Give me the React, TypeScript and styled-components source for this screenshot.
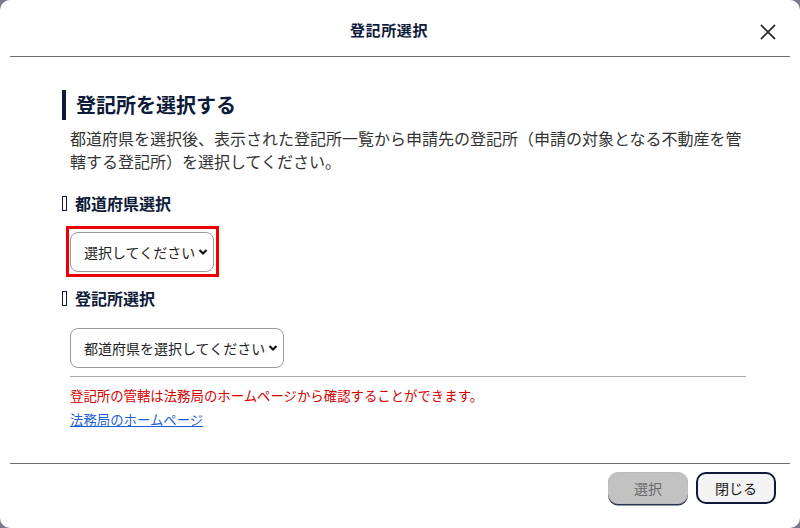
import styled, { createGlobalStyle } from 'styled-components';

const GlobalStyle = createGlobalStyle`
  html, body {
    margin: 0;
    padding: 0;
    background: #767b86;
  }
  body {
    font-family: "Noto Sans CJK JP", "Noto Sans", sans-serif;
  }
`;

const Dialog = styled.div`
  width: 800px;
  height: 528px;
  background: #ffffff;
  border-radius: 10px;
  display: flex;
  flex-direction: column;
  box-sizing: border-box;
  overflow: hidden;
`;

const Header = styled.header`
  margin: 0 10px;
  height: 56px;
  border-bottom: 1px solid #6f6f6f;
  display: grid;
  grid-template-columns: 1fr auto;
  align-items: center;
`;

const Title = styled.h1`
  margin: 0;
  padding: 2px 0 0 11px;
  text-align: center;
  font-size: 15px;
  font-weight: 700;
  color: #0d1a3a;
  letter-spacing: 0.6px;
`;

const CloseButton = styled.button`
  margin-right: 11px;
  margin-top: 8px;
  width: 22px;
  height: 22px;
  padding: 0;
  border: none;
  background: none;
  display: flex;
  align-items: center;
  justify-content: center;
  cursor: pointer;
`;

const Body = styled.main`
  flex: 1;
  padding: 33px 54px 0 62px;
  display: flex;
  flex-direction: column;
`;

const Heading = styled.h2`
  margin: 0;
  height: 30px;
  border-left: 4px solid #0d1a3a;
  padding-left: 10px;
  font-size: 20px;
  font-weight: 700;
  line-height: 30px;
  color: #0d1a3a;
`;

const Lead = styled.p`
  margin: 7px 0 0 8px;
  font-size: 16px;
  line-height: 23px;
  color: #333333;
`;

const Label = styled.div<{ $top: number }>`
  margin-top: ${(p) => p.$top}px;
  display: flex;
  align-items: center;
  gap: 8px;
  height: 24px;
  font-size: 16px;
  font-weight: 700;
  color: #0d1a3a;
`;

const LabelMark = styled.span`
  width: 3px;
  height: 13px;
  border: 1.5px solid #0d1a3a;
  margin-top: 1px;
`;

const Highlight = styled.div`
  position: relative;
  align-self: flex-start;
  margin: 17px 0 0 8px;
  &::after {
    content: '';
    position: absolute;
    inset: -6px -5px -5px -4px;
    border: 3px solid #ee0000;
    pointer-events: none;
  }
`;

const SelectBox = styled.div<{ $width: number; $top?: number }>`
  box-sizing: border-box;
  width: ${(p) => p.$width}px;
  height: 40px;
  margin: ${(p) => (p.$top != null ? `${p.$top}px 0 0 8px` : '0')};
  align-self: flex-start;
  border: 1px solid #9a9a9a;
  border-radius: 8px;
  background: #ffffff;
  padding: 0 5px 0 13px;
  display: flex;
  align-items: center;
  justify-content: space-between;
  font-size: 14px;
  color: #222222;
`;

const Divider = styled.hr`
  margin: 8px 0 0 8px;
  border: none;
  border-top: 1px solid #a8a8a8;
`;

const Note = styled.p`
  margin: 6px 0 0 8px;
  font-size: 13.4px;
  line-height: 24px;
  color: #d40000;
`;

const Link = styled.a`
  margin-left: 8px;
  align-self: flex-start;
  font-size: 13.4px;
  line-height: 24px;
  color: #1f5fd6;
  text-decoration: underline;
`;

const Footer = styled.footer`
  margin: 0 10px;
  border-top: 1px solid #6f6f6f;
  padding: 8px 14px 24px 0;
  display: flex;
  justify-content: flex-end;
  gap: 8px;
`;

const FooterButton = styled.button<{ $disabled?: boolean }>`
  box-sizing: border-box;
  width: 80px;
  height: 32px;
  border-radius: 10px;
  font-family: inherit;
  font-size: 14px;
  cursor: pointer;
  border: ${(p) => (p.$disabled ? '1px solid #bdbdbd' : '2px solid #0d1a3a')};
  background: ${(p) => (p.$disabled ? '#c2c2c2' : '#f4f4f4')};
  color: ${(p) => (p.$disabled ? '#6a6a6a' : '#1a1a1a')};
  box-shadow: ${(p) => (p.$disabled ? '0 1.5px 0 #2b3550' : 'none')};
`;

const Chevron = () => (
  <svg width="10" height="8" viewBox="0 0 10 8">
    <path d="M1.5 2 L5 5.5 L8.5 2" fill="none" stroke="#111" strokeWidth="2.2" />
  </svg>
);

export default function App() {
  return (
    <>
      <GlobalStyle />
      <Dialog>
        <Header>
          <Title>登記所選択</Title>
          <CloseButton aria-label="閉じる">
            <svg width="18" height="18" viewBox="0 0 18 18">
              <path d="M2 2 L16 16 M16 2 L2 16" stroke="#333" strokeWidth="1.8" />
            </svg>
          </CloseButton>
        </Header>
        <Body>
          <Heading>登記所を選択する</Heading>
          <Lead>
            都道府県を選択後、表示された登記所一覧から申請先の登記所（申請の対象となる不動産を管轄する登記所）を選択してください。
          </Lead>
          <Label $top={18}>
            <LabelMark />
            都道府県選択
          </Label>
          <Highlight>
            <SelectBox $width={144}>
              選択してください
              <Chevron />
            </SelectBox>
          </Highlight>
          <Label $top={14}>
            <LabelMark />
            登記所選択
          </Label>
          <SelectBox $width={214} $top={18}>
            都道府県を選択してください
            <Chevron />
          </SelectBox>
          <Divider />
          <Note>登記所の管轄は法務局のホームページから確認することができます。</Note>
          <Link href="#">法務局のホームページ</Link>
        </Body>
        <Footer>
          <FooterButton $disabled>選択</FooterButton>
          <FooterButton>閉じる</FooterButton>
        </Footer>
      </Dialog>
    </>
  );
}
